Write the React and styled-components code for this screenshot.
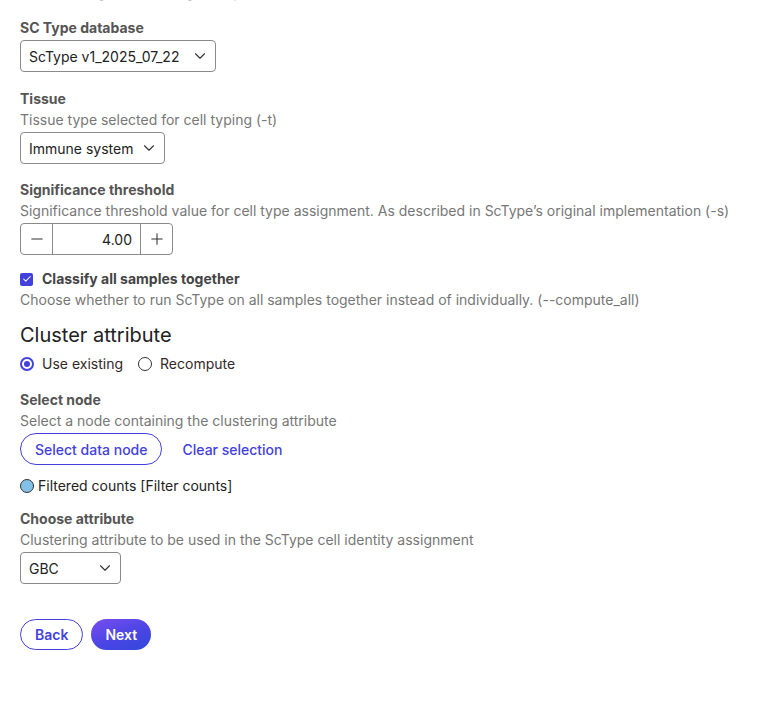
import React from 'react';
import styled, { createGlobalStyle } from 'styled-components';
import { ChevronDown, Minus, Plus, Check } from 'lucide-react';

const GlobalStyle = createGlobalStyle`
  body {
    margin: 0;
    background: #fff;
    font-family: Inter, "Noto Sans", sans-serif;
    color: #222;
  }
`;

const accent = '#4341de';

const Page = styled.div`
  padding: 0 20px;
  display: flex;
  flex-direction: column;
  align-items: flex-start;
`;

const StepTitle = styled.h2`
  margin: -25px 0 15px;
  font-size: 20px;
  font-weight: 700;
  line-height: 28px;
  color: #222;
`;

const SectionTitle = styled.h3`
  margin: 11px 0 5px;
  font-size: 20px;
  font-weight: 400;
  line-height: 28px;
  color: #222;
`;

const Field = styled.div`
  display: flex;
  flex-direction: column;
  align-items: flex-start;
  margin-bottom: ${p => p.$gap ?? 16}px;
`;

const Label = styled.div`
  font-size: 14px;
  font-weight: 700;
  line-height: 20px;
  color: #555;
`;

const Description = styled.div`
  font-size: 14px;
  line-height: 21px;
  color: #777;
`;

const Control = styled.div`
  margin-top: 2px;
  display: flex;
  align-items: center;
  gap: ${p => p.$gap ?? 0}px;
`;

const SelectBox = styled.div`
  box-sizing: border-box;
  height: 32px;
  min-width: ${p => p.$minWidth ?? 0}px;
  padding: 0 6px 0 8px;
  display: flex;
  align-items: center;
  justify-content: space-between;
  gap: 7px;
  border: 1px solid #8a8a8a;
  border-radius: 4px;
  font-size: 14px;
  color: #222;
  svg { color: #333; flex-shrink: 0; }
`;

const Stepper = styled.div`
  box-sizing: border-box;
  height: 32px;
  display: flex;
  border: 1px solid #8a8a8a;
  border-radius: 4px;
  font-size: 14px;
  color: #222;
`;

const StepButton = styled.div`
  width: 31px;
  display: flex;
  align-items: center;
  justify-content: center;
  color: #333;
`;

const StepValue = styled.div`
  width: 89px;
  padding-right: 8px;
  box-sizing: border-box;
  display: flex;
  align-items: center;
  justify-content: flex-end;
  border-left: 1px solid #8a8a8a;
  border-right: 1px solid #8a8a8a;
`;

const CheckRow = styled.div`
  display: flex;
  align-items: center;
  gap: 9px;
  line-height: 20px;
`;

const CheckBox = styled.span`
  width: 13px;
  height: 13px;
  border-radius: 2px;
  background: ${accent};
  display: flex;
  align-items: center;
  justify-content: center;
  color: #fff;
`;

const CheckLabel = styled.span`
  font-size: 14px;
  font-weight: 700;
  color: #444;
`;

const RadioGroup = styled.div`
  display: flex;
  align-items: center;
  gap: 15px;
  margin-bottom: 16px;
  line-height: 20px;
`;

const RadioOption = styled.label`
  display: flex;
  align-items: center;
  gap: 8px;
  font-size: 14px;
  color: #352828;
`;

const RadioDot = styled.span`
  box-sizing: border-box;
  width: 14px;
  height: 14px;
  border-radius: 50%;
  border: ${p => (p.$checked ? `2px solid ${accent}` : '1px solid #333')};
  display: flex;
  align-items: center;
  justify-content: center;
  &::after {
    content: '';
    display: ${p => (p.$checked ? 'block' : 'none')};
    width: 6px;
    height: 6px;
    border-radius: 50%;
    background: ${accent};
  }
`;

const PillButton = styled.button`
  box-sizing: border-box;
  height: ${p => p.$height ?? 32}px;
  padding: 0 ${p => p.$pad ?? 14}px;
  border-radius: 16px;
  font-family: inherit;
  font-size: 14px;
  font-weight: ${p => p.$weight ?? 500};
  cursor: pointer;
  border: 1px solid ${accent};
  color: ${accent};
  background: #fff;
  ${p => p.$primary && `
    border: none;
    color: #fff;
    background: linear-gradient(160deg, #7a4df0 0%, #4a45e4 55%, #3248dc 100%);
  `}
`;

const TextLink = styled.button`
  border: none;
  background: none;
  padding: 0;
  font-family: inherit;
  font-size: 14px;
  font-weight: 500;
  color: ${accent};
  cursor: pointer;
`;

const NodeRow = styled.div`
  display: flex;
  align-items: center;
  gap: 4px;
  font-size: 14px;
  line-height: 20px;
  color: #222;
  margin: 11px 0 13px;
`;

const NodeDot = styled.span`
  box-sizing: border-box;
  width: 14px;
  height: 14px;
  border-radius: 50%;
  background: #83c1e7;
  border: 1px solid #333;
`;

const Actions = styled.div`
  display: flex;
  gap: 8px;
  margin-top: 35px;
`;

export default function App() {
  return (
    <>
      <GlobalStyle />
      <Page>
        <StepTitle>Run ScType cell typing</StepTitle>

        <Field $gap={17}>
          <Label>SC Type database</Label>
          <Control>
            <SelectBox $minWidth={196}>
              ScType v1_2025_07_22
              <ChevronDown size={18} strokeWidth={1.5} />
            </SelectBox>
          </Control>
        </Field>

        <Field>
          <Label>Tissue</Label>
          <Description>Tissue type selected for cell typing (-t)</Description>
          <Control>
            <SelectBox>
              Immune system
              <ChevronDown size={18} strokeWidth={1.5} />
            </SelectBox>
          </Control>
        </Field>

        <Field $gap={14}>
          <Label>Significance threshold</Label>
          <Description>
            Significance threshold value for cell type assignment. As described in ScType’s original implementation (-s)
          </Description>
          <Control>
            <Stepper>
              <StepButton><Minus size={18} strokeWidth={1.4} /></StepButton>
              <StepValue>4.00</StepValue>
              <StepButton><Plus size={18} strokeWidth={1.4} /></StepButton>
            </Stepper>
          </Control>
        </Field>

        <Field $gap={0}>
          <CheckRow>
            <CheckBox><Check size={10} strokeWidth={2.5} /></CheckBox>
            <CheckLabel>Classify all samples together</CheckLabel>
          </CheckRow>
          <Description>
            Choose whether to run ScType on all samples together instead of individually. (--compute_all)
          </Description>
        </Field>

        <SectionTitle>Cluster attribute</SectionTitle>
        <RadioGroup>
          <RadioOption><RadioDot $checked />Use existing</RadioOption>
          <RadioOption><RadioDot />Recompute</RadioOption>
        </RadioGroup>

        <Field $gap={0}>
          <Label>Select node</Label>
          <Description>Select a node containing the clustering attribute</Description>
          <Control $gap={20}>
            <PillButton>Select data node</PillButton>
            <TextLink>Clear selection</TextLink>
          </Control>
        </Field>

        <NodeRow>
          <NodeDot />
          Filtered counts [Filter counts]
        </NodeRow>

        <Field $gap={0}>
          <Label>Choose attribute</Label>
          <Description>Clustering attribute to be used in the ScType cell identity assignment</Description>
          <Control>
            <SelectBox $minWidth={101}>
              GBC
              <ChevronDown size={18} strokeWidth={1.5} />
            </SelectBox>
          </Control>
        </Field>

        <Actions>
          <PillButton $height={31} $pad={14} $weight={600}>Back</PillButton>
          <PillButton $primary $height={31} $pad={14} $weight={600}>Next</PillButton>
        </Actions>
      </Page>
    </>
  );
}
